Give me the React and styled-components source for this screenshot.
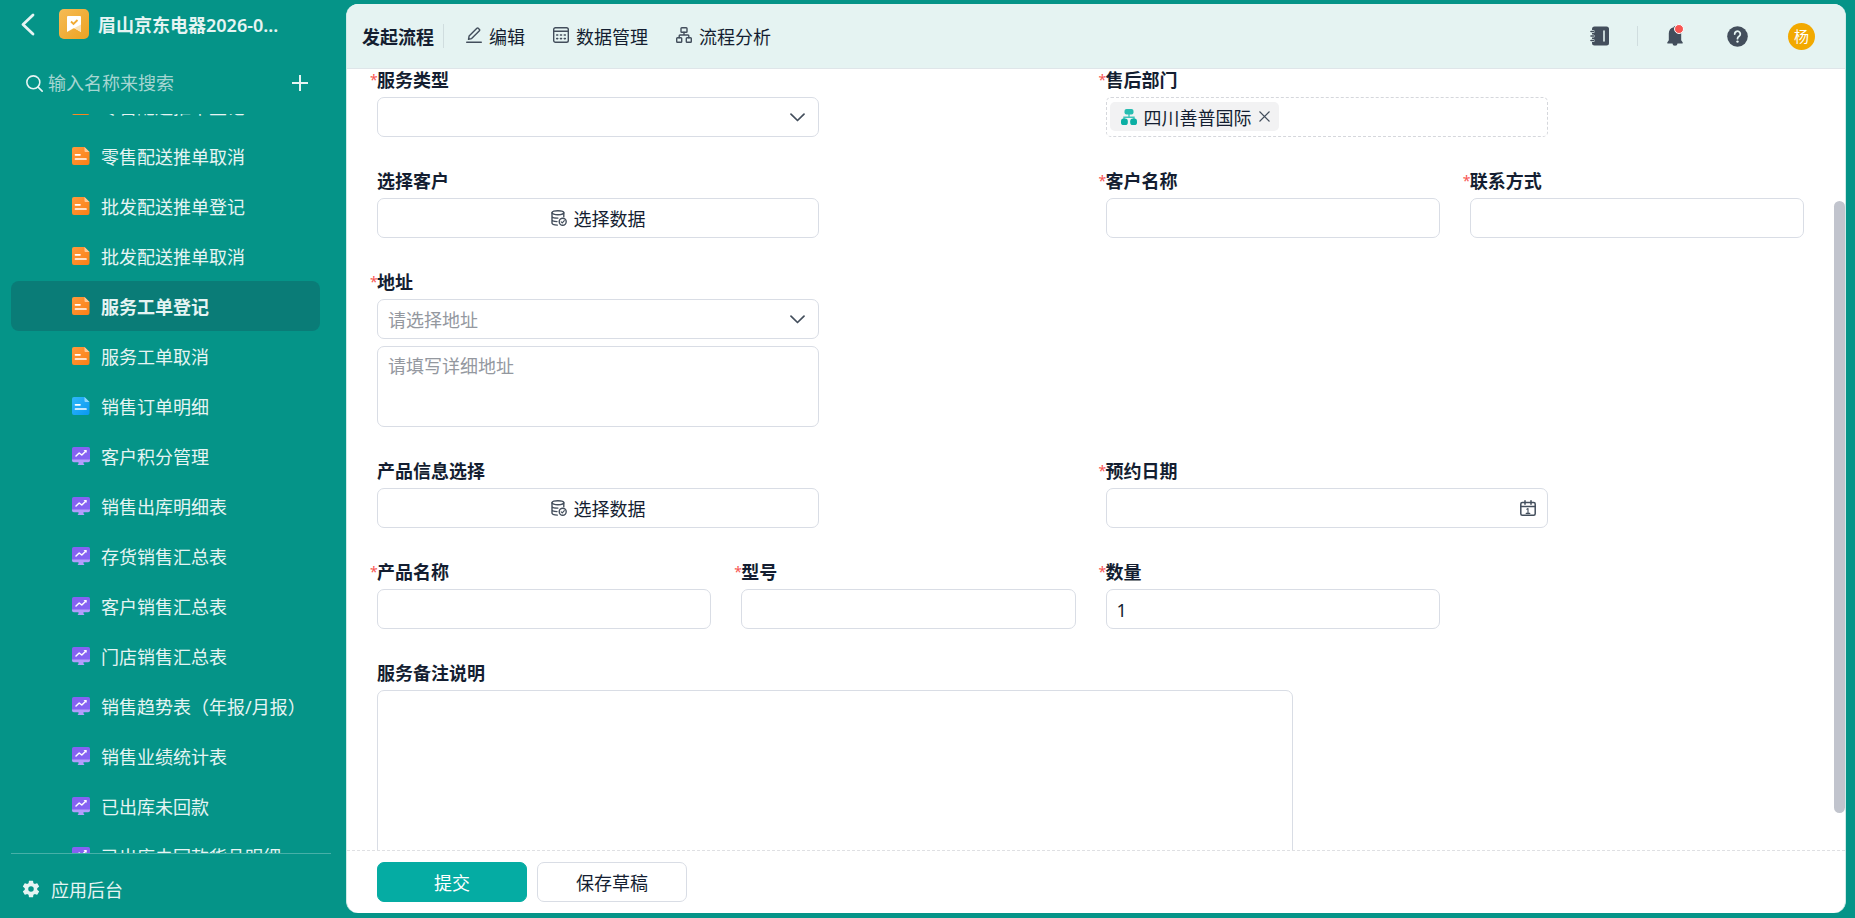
import React, { useLayoutEffect, useRef } from "react";
import styled, { createGlobalStyle, css } from "styled-components";

const GlobalStyle = createGlobalStyle`
  *, *::before, *::after {
    box-sizing: border-box;
  }
  html, body, #root {
    height: 100%;
    margin: 0;
  }
  body, button, input, select, textarea {
    font-family: "Noto Sans", "Noto Sans CJK SC", sans-serif;
    font-size: 18px;
    color: #141e31;
  }
  button {
    padding: 0;
    border: 0;
    background: none;
    cursor: pointer;
  }
  svg {
    display: block;
    flex: none;
  }
`;

const Page = styled.div`
  display: flex;
  height: 100vh;
  overflow: hidden;
  background: #059488;
`;

/* ---------- sidebar ---------- */

const Sidebar = styled.aside`
  display: flex;
  flex-direction: column;
  flex: 0 0 346px;
  min-width: 0;
  min-height: 0;
  color: #e6f4f3;
`;

const AppHeader = styled.header`
  display: flex;
  align-items: center;
  height: 48px;
  padding-left: 20px;
`;

const BackButton = styled.button`
  width: 39px;
`;

const AppName = styled.h1`
  margin: 2px 0 0 9px;
  font-size: 18px;
  line-height: 24px;
  font-weight: 600;
  white-space: nowrap;
`;

const SearchBar = styled.div`
  display: flex;
  align-items: center;
  height: 66px;
  padding: 4px 38px 0 26px;
`;

const SearchInput = styled.input`
  flex: 1;
  min-width: 0;
  height: 30px;
  margin: 0 0 0 5px;
  padding: 0;
  border: 0;
  outline: 0;
  background: none;
  &::placeholder {
    color: #a5d6d2;
    opacity: 1;
  }
`;

const NavList = styled.nav`
  flex: 1;
  min-height: 0;
  padding: 0 26px 0 11px;
  overflow-y: auto;
  scrollbar-width: none;
`;

const NavItem = styled.a`
  display: flex;
  align-items: center;
  gap: 11px;
  height: 50px;
  padding-left: 61px;
  border-radius: 8px;
  color: #e6f4f3;
  text-decoration: none;
  white-space: nowrap;
  ${({ $active }) =>
    $active &&
    css`
      background: #0a7c77;
      font-weight: 700;
    `}
`;

const SidebarFooter = styled.footer`
  display: flex;
  height: 65px;
  margin: 0 15px 0 11px;
  padding: 5px 0 0 10px;
  border-top: 1px solid #47b0a8;
`;

const BackstageLink = styled.a`
  display: flex;
  align-items: center;
  gap: 10px;
  color: #e6f4f3;
  text-decoration: none;
`;

/* ---------- main panel ---------- */

const Panel = styled.main`
  display: flex;
  flex-direction: column;
  flex: 1;
  min-width: 0;
  margin: 4px 9px 5px 0;
  border: solid #cfeae7;
  border-width: 0 1px;
  border-radius: 12px;
  overflow: hidden;
  background: #fff;
`;

const Toolbar = styled.header`
  display: flex;
  align-items: center;
  flex: 0 0 65px;
  padding: 0 30px 0 15px;
  border-bottom: 1px solid #dfe5e9;
  background: #e5f3f2;
`;

const ToolbarTitle = styled.h2`
  margin: 0;
  padding-top: 2px;
  font-size: 18px;
  line-height: 24px;
  font-weight: 700;
`;

const Divider = styled.span`
  width: 1px;
  height: ${({ $height }) => $height}px;
  background: #d0dddf;
`;

const ToolbarActions = styled.div`
  display: flex;
  align-items: center;
  gap: 28px;
  margin-right: auto;
  padding: 2px 0 0 22px;
`;

const TitleGroup = styled.div`
  display: flex;
  align-items: center;
  gap: 9px;
`;

const ToolbarAction = styled.button`
  display: flex;
  align-items: center;
  gap: 7px;
  line-height: 24px;
  white-space: nowrap;
  & > svg {
    margin-bottom: 4px;
  }
`;

const ToolbarIcons = styled.div`
  display: flex;
  align-items: center;
`;

const IconButton = styled.button`
  position: relative;
  display: flex;
  align-items: center;
  justify-content: center;
  width: ${({ $width }) => $width}px;
  height: 30px;
`;

const UnreadDot = styled.span`
  position: absolute;
  top: 3px;
  right: 28px;
  width: 10px;
  height: 10px;
  border: 1px solid #fff;
  border-radius: 50%;
  background: #f85552;
`;

const Avatar = styled.button`
  width: 27px;
  height: 27px;
  margin-left: 26px;
  border-radius: 50%;
  background: #f2a900;
  color: #fff;
  font-size: 15px;
  line-height: 26px;
`;

const FormBody = styled.div`
  display: flex;
  flex: 1;
  min-height: 0;
  overflow: hidden;
`;

const FormGrid = styled.form`
  display: grid;
  grid-template-columns: repeat(4, minmax(0, 1fr));
  align-content: start;
  gap: 33px 30px;
  flex: 1;
  min-width: 0;
  padding: 0 30px;
`;

const ScrollTrack = styled.div`
  display: grid;
  grid-template-rows: 132fr 612fr 37fr;
  flex: 0 0 11px;
`;

const ScrollThumb = styled.div`
  grid-row: 2;
  border-radius: 6px;
  background: #c1c4cd;
`;

const FieldBox = styled.div`
  grid-column: ${({ $newRow }) => ($newRow ? "1" : "auto")} / span ${({ $span }) => $span};
  min-width: 0;
`;

const FieldLabel = styled.label`
  display: flex;
  width: max-content;
  margin-bottom: 6px;
  font-weight: 700;
  line-height: 22px;
`;

const Required = styled.span`
  width: 7px;
  margin-left: -7px;
  color: #f85552;
  font-size: 14px;
  font-weight: 400;
`;

const Control = styled.div`
  display: flex;
  flex-direction: column;
  gap: 7px;
  width: ${({ $full }) => ($full ? "100%" : "calc(65% - 12px)")};
`;

const frame = css`
  width: 100%;
  border: 1px solid #d9dde5;
  border-radius: 7px;
  background: #fff;
`;

const TextInput = styled.input`
  ${frame}
  height: 40px;
  margin: 0;
  padding: 2px 10px 0;
`;

const TextArea = styled.textarea`
  ${frame}
  display: block;
  height: ${({ $height }) => $height}px;
  margin: 0;
  padding: 6px 10px;
  line-height: 26px;
  resize: none;
  &::placeholder {
    color: #94989f;
    opacity: 1;
  }
`;

const InputWrap = styled.div`
  ${frame}
  display: flex;
  align-items: center;
  height: 40px;
  padding-right: 11px;
`;

const BareInput = styled.input`
  flex: 1;
  min-width: 0;
  padding: 0 10px;
  border: 0;
  outline: 0;
  background: none;
`;

const SelectWrap = styled.div`
  ${frame}
  display: grid;
  align-items: center;
  height: 40px;
  & > * {
    grid-area: 1 / 1;
  }
  & > svg {
    justify-self: end;
    margin-right: 13px;
    pointer-events: none;
  }
`;

const BareSelect = styled.select`
  width: 100%;
  height: 38px;
  padding: 2px 10px 0;
  border: 0;
  border-radius: 7px;
  outline: 0;
  appearance: none;
  background: none;
  color: #94989f;
`;

const PickButton = styled.button`
  ${frame}
  display: flex;
  align-items: center;
  justify-content: center;
  gap: 7px;
  height: 40px;
`;

const TagBox = styled.div`
  display: flex;
  height: 40px;
  padding: 4px 3px;
  border: 1px dashed #d5d7dc;
  border-radius: 5px;
`;

const Tag = styled.span`
  display: flex;
  align-items: center;
  gap: 7px;
  height: 29px;
  padding: 0 9px 0 11px;
  border-radius: 5px;
  background: #f2f2f3;
  white-space: nowrap;
`;

const Actions = styled.footer`
  display: flex;
  flex: 0 0 63px;
  gap: 10px;
  padding: 11px 30px 0;
  border-top: 1px dashed #dfe0e3;
`;

const ActionButton = styled.button`
  width: 150px;
  height: 40px;
  border: 1px solid ${({ $primary }) => ($primary ? "#05aca3" : "#d9dde5")};
  border-radius: 7px;
  background: ${({ $primary }) => ($primary ? "#05aca3" : "#fff")};
  color: ${({ $primary }) => ($primary ? "#fff" : "#141e31")};
`;

/* ---------- icons ---------- */

const LineIcon = ({ size = 16, children, ...rest }) => (
  <svg
    width={size}
    height={size}
    viewBox="0 0 16 16"
    fill="none"
    stroke="#434e5c"
    strokeWidth="1.4"
    strokeLinecap="round"
    strokeLinejoin="round"
    aria-hidden="true"
    {...rest}
  >
    {children}
  </svg>
);

const BackIcon = () => (
  <svg width="16" height="24" viewBox="0 0 16 24" fill="none" aria-hidden="true">
    <path
      d="M13 3 3 12.500 13 22"
      stroke="#e6f4f3"
      strokeWidth="2.800"
      strokeLinecap="round"
      strokeLinejoin="round"
    />
  </svg>
);

const AppIcon = () => (
  <svg width="30" height="30" viewBox="0 0 30 30" aria-hidden="true">
    <defs>
      <linearGradient id="appFill" x1="0" y1="0" x2="1" y2="1">
        <stop offset="0" stopColor="#f6bb55" />
        <stop offset="1" stopColor="#eca321" />
      </linearGradient>
    </defs>
    <rect width="30" height="30" rx="5" fill="url(#appFill)" />
    <path d="M9 7h12a1 1 0 0 1 1 1v15l-7-4-7 4V8a1 1 0 0 1 1-1Z" fill="#fff" />
    <path d="M8 23 22 15.500V23l-7-4Z" fill="#fbe3b8" />
    <path
      d="m12 12.500 2.500 2.500 4-4"
      fill="none"
      stroke="#f0aa34"
      strokeWidth="1.800"
    />
  </svg>
);

const SearchIcon = () => (
  <LineIcon size={17} stroke="#e6f4f3" strokeWidth="1.500">
    <circle cx="6.900" cy="6.900" r="6.100" />
    <path d="m11.400 11.400 3.800 3.800" />
  </LineIcon>
);

const PlusIcon = () => (
  <LineIcon size={16} stroke="#e6f4f3" strokeWidth="2" strokeLinecap="butt">
    <path d="M8 0v16M0 8h16" />
  </LineIcon>
);

const docColors = {
  orange: ["#ff9a3c", "#fb7f15", "#ffc998"],
  blue: ["#2fb7fb", "#0a98f0", "#8fd8fd"]
};

const DocIcon = ({ tone }) => {
  const [from, to, fold] = docColors[tone];
  return (
    <svg width="18" height="18" viewBox="0 0 18 18" aria-hidden="true">
      <defs>
        <linearGradient id={`doc-${tone}`} x1="0" y1="0" x2="1" y2="1">
          <stop offset="0" stopColor={from} />
          <stop offset="1" stopColor={to} />
        </linearGradient>
      </defs>
      <path
        d="M2 0h10.500L17.500 5v11a2 2 0 0 1-2 2H2a2 2 0 0 1-2-2V2a2 2 0 0 1 2-2Z"
        fill={`url(#doc-${tone})`}
      />
      <path d="M12.500 0 17.500 5h-4a1 1 0 0 1-1-1Z" fill={fold} />
      <path
        d="M3.500 7.800h4.500M3.500 12h10.500"
        stroke="#fff"
        strokeWidth="1.700"
        strokeLinecap="round"
      />
    </svg>
  );
};

const ChartIcon = () => (
  <svg width="18" height="18" viewBox="0 0 18 18" aria-hidden="true">
    <path d="M6.500 14h5v2.400l1 1.600h-7l1-1.600Z" fill="#b39dfd" />
    <path d="M0 11h18v2.500a1.800 1.800 0 0 1-1.800 1.800H1.800A1.800 1.800 0 0 1 0 13.500Z" fill="#b39dfd" />
    <path d="M1.800 0h14.400A1.800 1.800 0 0 1 18 1.800V12.500H0V1.800A1.800 1.800 0 0 1 1.800 0Z" fill="#8562f2" />
    <path
      d="m4 9 3.200-3 2.600 2L14 4"
      fill="none"
      stroke="#fff"
      strokeWidth="1.500"
      strokeLinecap="round"
      strokeLinejoin="round"
    />
    <path d="M11.500 3h3v3Z" fill="#fff" />
  </svg>
);

const GearIcon = () => (
  <svg width="20" height="20" viewBox="0 0 24 24" fill="#e6f4f3" aria-hidden="true">
    <path d="M19.430 12.980c.040-.320.070-.640.070-.980s-.030-.660-.070-.980l2.110-1.650c.190-.150.240-.420.120-.640l-2-3.460c-.120-.220-.390-.300-.610-.220l-2.490 1c-.520-.400-1.080-.730-1.690-.980l-.380-2.650A.488.488 0 0 0 14 2h-4c-.250 0-.460.180-.490.420l-.380 2.650c-.610.250-1.170.590-1.690.980l-2.490-1c-.230-.090-.490 0-.610.220l-2 3.460c-.130.220-.070.490.120.640l2.110 1.650c-.040.320-.070.650-.070.980s.030.660.070.980l-2.110 1.650c-.190.150-.240.420-.120.640l2 3.460c.120.220.390.300.610.220l2.490-1c.520.400 1.080.730 1.690.980l.380 2.650c.030.240.240.420.490.420h4c.250 0 .460-.180.490-.420l.380-2.650c.610-.250 1.170-.590 1.690-.980l2.490 1c.230.090.490 0 .610-.220l2-3.460c.120-.220.070-.490-.120-.640ZM12 15.300a3.300 3.300 0 1 1 0-6.600 3.300 3.300 0 0 1 0 6.600Z" />
  </svg>
);

const EditIcon = () => (
  <LineIcon>
    <path d="M.7 15.300h14.600M2.500 12.300l.6-3.200L10.900 1.300a1 1 0 0 1 1.400 0l1.100 1.100a1 1 0 0 1 0 1.400l-7.800 7.800Z" />
  </LineIcon>
);

const TableIcon = () => (
  <LineIcon>
    <rect x=".7" y=".7" width="14.600" height="14.600" rx="1.800" />
    <path d="M.7 4.300h14.600" />
    <path
      d="M3.700 8h1M7.500 8h1M11.300 8h1M3.700 11.600h1M7.500 11.600h1M11.300 11.600h1"
      strokeWidth="1.600"
    />
  </LineIcon>
);

const FlowIcon = () => (
  <LineIcon>
    <rect x="5" y=".7" width="6" height="4.600" rx=".8" />
    <rect x=".7" y="10.700" width="5" height="4.600" rx=".8" />
    <rect x="10.300" y="10.700" width="5" height="4.600" rx=".8" />
    <path d="M8 5.300V8M3.200 10.700V8.800a.8.800 0 0 1 .8-.8h8a.8.800 0 0 1 .8.800v1.900" />
  </LineIcon>
);

const NotebookIcon = () => (
  <svg width="20" height="20" viewBox="0 0 20 20" aria-hidden="true">
    <rect x="2" y=".5" width="17" height="19" rx="2.500" fill="#434e5c" />
    <path
      d="M1 5.500h2.200M1 10h2.200M1 14.500h2.200"
      stroke="#e5f3f2"
      strokeWidth="3"
      strokeLinecap="round"
    />
    <path
      d="M1 5.500h2.600M1 10h2.600M1 14.500h2.600"
      stroke="#434e5c"
      strokeWidth="1.600"
      strokeLinecap="round"
    />
    <path d="M14 5v10" stroke="#e5f3f2" strokeWidth="1.600" strokeLinecap="round" />
  </svg>
);

const BellIcon = () => (
  <svg width="16" height="20" viewBox="0 0 16 20" fill="#434e5c" aria-hidden="true">
    <path d="M8 0a1.400 1.400 0 0 1 1.300 1.300c3 .6 4.900 3 4.900 6v7l1.400 2a.8.800 0 0 1-.6 1.300H1a.8.800 0 0 1-.6-1.300l1.400-2v-7c0-3 1.900-5.400 4.900-6A1.400 1.400 0 0 1 8 0ZM5.500 17.600h5a2.500 2.200 0 0 1-5 0Z" />
  </svg>
);

const HelpIcon = () => (
  <svg width="21" height="21" viewBox="0 0 21 21" fill="none" aria-hidden="true">
    <circle cx="10.500" cy="10.500" r="10.300" fill="#434e5c" />
    <path
      d="M7.700 8a2.800 2.800 0 1 1 4.400 2.300c-1 .7-1.600 1.200-1.600 2.400"
      stroke="#e5f3f2"
      strokeWidth="1.800"
      strokeLinecap="round"
    />
    <circle cx="10.500" cy="15.600" r="1.200" fill="#e5f3f2" />
  </svg>
);

const ChevronIcon = () => (
  <svg width="15" height="9" viewBox="0 0 15 9" fill="none" aria-hidden="true">
    <path
      d="m1 1.200 6.500 6.300L14 1.200"
      stroke="#434e5c"
      strokeWidth="1.700"
      strokeLinecap="round"
      strokeLinejoin="round"
    />
  </svg>
);

const DatabaseIcon = () => (
  <LineIcon>
    <ellipse cx="6.900" cy="2.700" rx="5.900" ry="2" />
    <path d="M1 2.700v10.400c0 1.100 2.400 1.900 5.400 2M12.800 2.700v4M1 6.200c0 1.100 2.600 1.900 5.900 1.900M1 9.700c0 1 2.200 1.800 5 1.900" />
    <circle cx="11.700" cy="11.700" r="3.500" />
    <path d="m10.200 11.800 1.100 1.100 2-2.200" strokeWidth="1.200" />
  </LineIcon>
);

const CalendarIcon = () => (
  <LineIcon strokeWidth="1.500">
    <rect x=".8" y="2.500" width="14.400" height="12.700" rx="1.500" />
    <path d="M.8 6.600h14.400M5 .8v3.400M11 .8v3.400" />
    <path d="M6.800 9.200 8 8.600v5M6.200 13.400h3.600" strokeWidth="1.100" />
  </LineIcon>
);

const DepartmentIcon = () => (
  <svg width="16" height="16" viewBox="0 0 16 16" aria-hidden="true">
    <path d="M8 5v3.200M3 11V8.200h10V11" fill="none" stroke="#3dc4b9" strokeWidth="1.400" />
    <rect x="3.500" width="9" height="5.500" rx="2" fill="#28bdb1" />
    <rect y="9.600" width="6.800" height="6.400" rx="2.600" fill="#0bafa4" />
    <rect x="9.200" y="9.600" width="6.800" height="6.400" rx="2.600" fill="#0bafa4" />
  </svg>
);

const CloseIcon = () => (
  <svg width="11" height="11" viewBox="0 0 11 11" aria-hidden="true">
    <path d="m.5.5 10 10M10.500.5l-10 10" stroke="#434e5c" strokeWidth="1.100" />
  </svg>
);

/* ---------- data ---------- */

const navItems = [
  { label: "零售配送推单登记", icon: "orange" },
  { label: "零售配送推单取消", icon: "orange" },
  { label: "批发配送推单登记", icon: "orange" },
  { label: "批发配送推单取消", icon: "orange" },
  { label: "服务工单登记", icon: "orange", active: true },
  { label: "服务工单取消", icon: "orange" },
  { label: "销售订单明细", icon: "blue" },
  { label: "客户积分管理", icon: "chart" },
  { label: "销售出库明细表", icon: "chart" },
  { label: "存货销售汇总表", icon: "chart" },
  { label: "客户销售汇总表", icon: "chart" },
  { label: "门店销售汇总表", icon: "chart" },
  { label: "销售趋势表（年报/月报）", icon: "chart" },
  { label: "销售业绩统计表", icon: "chart" },
  { label: "已出库未回款", icon: "chart" },
  { label: "已出库未回款货品明细", icon: "chart" }
];

/* ---------- components ---------- */

const Navigation = () => {
  const list = useRef(null);

  // the list opens slightly scrolled
  useLayoutEffect(() => {
    list.current.scrollTop = 33;
  }, []);

  return (
    <NavList ref={list}>
      {navItems.map(({ label, icon, active }) => (
        <NavItem
          key={label}
          href="#"
          $active={active}
          aria-current={active ? "page" : undefined}
        >
          {icon === "chart" ? <ChartIcon /> : <DocIcon tone={icon} />}
          {label}
        </NavItem>
      ))}
    </NavList>
  );
};

const Field = ({ id, label, required, span = 1, newRow, children }) => (
  <FieldBox $span={span} $newRow={newRow}>
    <FieldLabel htmlFor={id}>
      {required && <Required>*</Required>}
      {label}
    </FieldLabel>
    <Control $full={span === 1}>{children}</Control>
  </FieldBox>
);

const SelectField = ({ id, placeholder }) => (
  <SelectWrap>
    <BareSelect id={id} defaultValue="">
      <option value="">{placeholder}</option>
    </BareSelect>
    <ChevronIcon />
  </SelectWrap>
);

const DataPicker = ({ id }) => (
  <PickButton id={id} type="button">
    <DatabaseIcon />
    选择数据
  </PickButton>
);

const ServiceForm = () => (
  <FormGrid id="service-form">
    <Field id="service-type" label="服务类型" required span={2}>
      <SelectField id="service-type" placeholder="" />
    </Field>
    <Field id="department" label="售后部门" required span={2}>
      <TagBox>
        <Tag>
          <DepartmentIcon />
          四川善普国际
          <button id="department" type="button" aria-label="移除四川善普国际">
            <CloseIcon />
          </button>
        </Tag>
      </TagBox>
    </Field>

    <Field id="pick-customer" label="选择客户" span={2}>
      <DataPicker id="pick-customer" />
    </Field>
    <Field id="customer-name" label="客户名称" required>
      <TextInput id="customer-name" />
    </Field>
    <Field id="contact" label="联系方式" required>
      <TextInput id="contact" />
    </Field>

    <Field id="address" label="地址" required span={2}>
      <SelectField id="address" placeholder="请选择地址" />
      <TextArea placeholder="请填写详细地址" aria-label="详细地址" $height={81} />
    </Field>

    <Field id="pick-product" label="产品信息选择" span={2} newRow>
      <DataPicker id="pick-product" />
    </Field>
    <Field id="visit-date" label="预约日期" required span={2}>
      <InputWrap>
        <BareInput id="visit-date" />
        <CalendarIcon />
      </InputWrap>
    </Field>

    <Field id="product-name" label="产品名称" required>
      <TextInput id="product-name" />
    </Field>
    <Field id="model" label="型号" required>
      <TextInput id="model" />
    </Field>
    <Field id="quantity" label="数量" required>
      <TextInput id="quantity" defaultValue="1" />
    </Field>

    <Field id="remark" label="服务备注说明" span={4} newRow>
      <TextArea id="remark" $height={200} />
    </Field>
  </FormGrid>
);

const App = () => (
  <Page>
    <GlobalStyle />
    <Sidebar>
      <AppHeader>
        <BackButton type="button" aria-label="返回">
          <BackIcon />
        </BackButton>
        <AppIcon />
        <AppName>眉山京东电器2026-0...</AppName>
      </AppHeader>
      <SearchBar>
        <SearchIcon />
        <SearchInput placeholder="输入名称来搜索" aria-label="输入名称来搜索" />
        <button type="button" aria-label="新建">
          <PlusIcon />
        </button>
      </SearchBar>
      <Navigation />
      <SidebarFooter>
        <BackstageLink href="#">
          <GearIcon />
          应用后台
        </BackstageLink>
      </SidebarFooter>
    </Sidebar>

    <Panel>
      <Toolbar>
        <TitleGroup>
          <ToolbarTitle>发起流程</ToolbarTitle>
          <Divider $height={24} />
        </TitleGroup>
        <ToolbarActions>
          <ToolbarAction type="button">
            <EditIcon />
            编辑
          </ToolbarAction>
          <ToolbarAction type="button">
            <TableIcon />
            数据管理
          </ToolbarAction>
          <ToolbarAction type="button">
            <FlowIcon />
            流程分析
          </ToolbarAction>
        </ToolbarActions>
        <ToolbarIcons>
          <IconButton type="button" aria-label="通讯录" $width={74}>
            <NotebookIcon />
          </IconButton>
          <Divider $height={20} />
          <IconButton type="button" aria-label="通知" $width={74}>
            <BellIcon />
            <UnreadDot />
          </IconButton>
          <IconButton type="button" aria-label="帮助" $width={50}>
            <HelpIcon />
          </IconButton>
          <Avatar type="button">杨</Avatar>
        </ToolbarIcons>
      </Toolbar>
      <FormBody>
        <ServiceForm />
        <ScrollTrack>
          <ScrollThumb />
        </ScrollTrack>
      </FormBody>
      <Actions>
        <ActionButton type="submit" form="service-form" $primary>
          提交
        </ActionButton>
        <ActionButton type="button">保存草稿</ActionButton>
      </Actions>
    </Panel>
  </Page>
);

export default App;
